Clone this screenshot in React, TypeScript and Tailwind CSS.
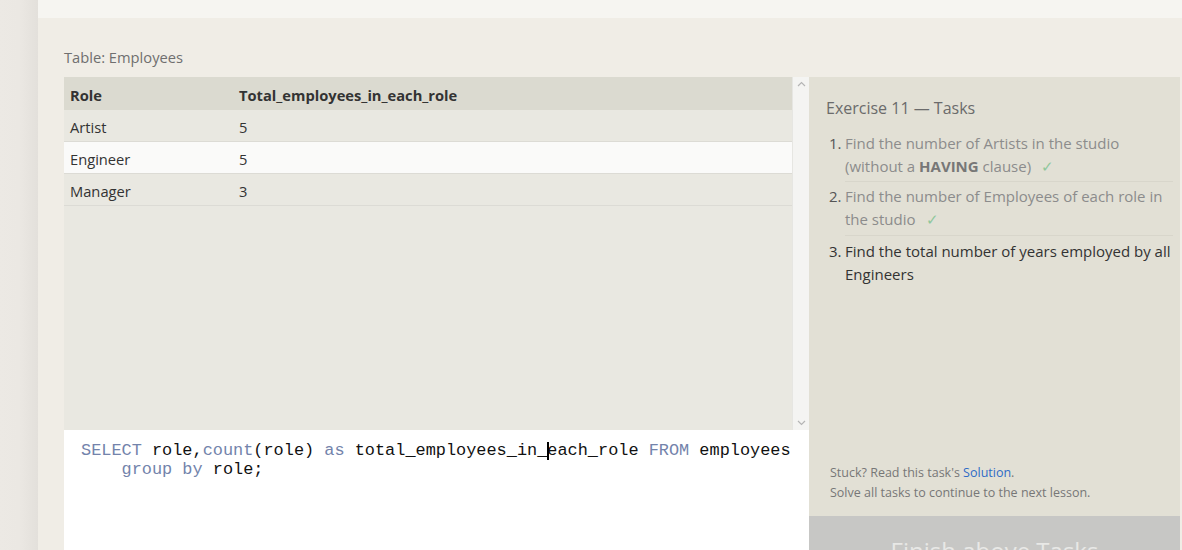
import React from "react";

const rows = [
  { role: "Artist", n: "5", hl: false },
  { role: "Engineer", n: "5", hl: true },
  { role: "Manager", n: "3", hl: false },
];

function Check() {
  return <span className="ml-[10px] text-[#8fc79c]">✓</span>;
}

export default function App() {
  const sans = { fontFamily: '"Open Sans", "Noto Sans", sans-serif' };
  return (
    <div className="flex w-[1182px] h-[550px] overflow-hidden bg-[#ebe8e3]" style={sans}>
      <div className="w-[38px] shrink-0 bg-gradient-to-r from-[#ece9e4] via-[#ebe8e3] to-[#e3e0db]" />
      <div className="flex-1 flex flex-col min-w-0">
        <div className="h-[18px] bg-[#f6f5f1] shrink-0" />
        <div className="flex-1 bg-[#f0ede6] pl-[26px] flex flex-col min-h-0">
          <div className="h-[59px] shrink-0 pt-[28px] text-[14.7px] leading-[22px] text-[#6f6f6f]">
            Table: Employees
          </div>
          <div className="flex flex-1 min-h-0">
            <div className="w-[745px] shrink-0 flex flex-col">
              <div className="h-[353px] shrink-0 flex bg-[#e9e8e1]">
                <div className="flex-1">
                  <div className="h-[33px] flex items-center pt-[3px] bg-[#dbdad0] text-[14.7px] font-bold text-[#333]">
                    <div className="w-[175px] pl-[6px]">Role</div>
                    <div>Total_employees_in_each_role</div>
                  </div>
                  {rows.map((r) => (
                    <div
                      key={r.role}
                      className={`h-[32px] flex items-center pt-[3px] text-[14.7px] text-[#333] border-b border-[#dcdbd5] ${r.hl ? "bg-[#fafaf9]" : "bg-[#e9e8e1]"}`}
                    >
                      <div className="w-[175px] pl-[6px]">{r.role}</div>
                      <div>{r.n}</div>
                    </div>
                  ))}
                </div>
                <div className="w-[17px] bg-[#f4f4f2] flex flex-col items-center justify-between py-[4px] border-l border-[#e6e6e2]">
                  <svg width="9" height="6" viewBox="0 0 9 6"><path d="M1 5 L4.5 1.5 L8 5" stroke="#b5b5b5" strokeWidth="1.2" fill="none" /></svg>
                  <svg width="9" height="6" viewBox="0 0 9 6"><path d="M1 1 L4.5 4.5 L8 1" stroke="#b5b5b5" strokeWidth="1.2" fill="none" /></svg>
                </div>
              </div>
              <div
                className="flex-1 bg-white pl-[17px] pt-[11px] text-[16.9px] leading-[19px] text-[#111]"
                style={{ fontFamily: '"Liberation Mono", "Courier New", monospace' }}
              >
                <div className="whitespace-pre">
                  <span className="text-[#7383ab]">SELECT</span> role,<span className="text-[#7383ab]">count</span>(role) <span className="text-[#7383ab]">as</span> total_employees_in_<span className="relative"><span className="absolute left-0 top-[1px] h-[18px] w-[2px] bg-black" />each_role</span> <span className="text-[#7383ab]">FROM</span> employees
                </div>
                <div className="whitespace-pre">
                  {"    "}<span className="text-[#7383ab]">group by</span> role;
                </div>
              </div>
            </div>
            <div className="flex-1 flex flex-col mr-[2px] min-h-0">
              <div className="h-[439px] shrink-0 bg-[#e2e0d5] flex flex-col pl-[17px] pr-[7px] pt-[19px]">
                <div className="text-[16px] leading-[24px] text-[#6b6b6b]">Exercise 11 — Tasks</div>
                <ol className="mt-[12px] text-[15px] leading-[23px]">
                  <li className="flex">
                    <span className="w-[19px] pl-[3px] text-[#555]">1.</span>
                    <span className="flex-1 pb-[3px] border-b border-[#d8d6cb] text-[#8c8c8c]">
                      Find the number of Artists in the studio (without a <b className="text-[#777]">HAVING</b> clause)<Check />
                    </span>
                  </li>
                  <li className="flex">
                    <span className="w-[19px] pl-[3px] pt-[3px] text-[#555]">2.</span>
                    <span className="flex-1 pt-[3px] pb-[4px] border-b border-[#d8d6cb] text-[#8c8c8c]">
                      Find the number of Employees of each role in the studio<Check />
                    </span>
                  </li>
                  <li className="flex">
                    <span className="w-[19px] pl-[3px] pt-[4px] text-[#333]">3.</span>
                    <span className="flex-1 pt-[4px] text-[#333]">Find the total number of years employed by all Engineers</span>
                  </li>
                </ol>
                <div className="mt-auto pb-[13px] pl-[4px] text-[12.5px] leading-[20px] text-[#777]">
                  <div>
                    Stuck? Read this task's <span className="text-[#2f6bc6]">Solution</span>.
                  </div>
                  <div>Solve all tasks to continue to the next lesson.</div>
                </div>
              </div>
              <div className="flex-1 overflow-hidden bg-[#c7c7c5] flex justify-center pt-[19px] text-[24px] leading-[32px] text-[#e8e8e6]">
                Finish above Tasks
              </div>
            </div>
          </div>
        </div>
      </div>
    </div>
  );
}
